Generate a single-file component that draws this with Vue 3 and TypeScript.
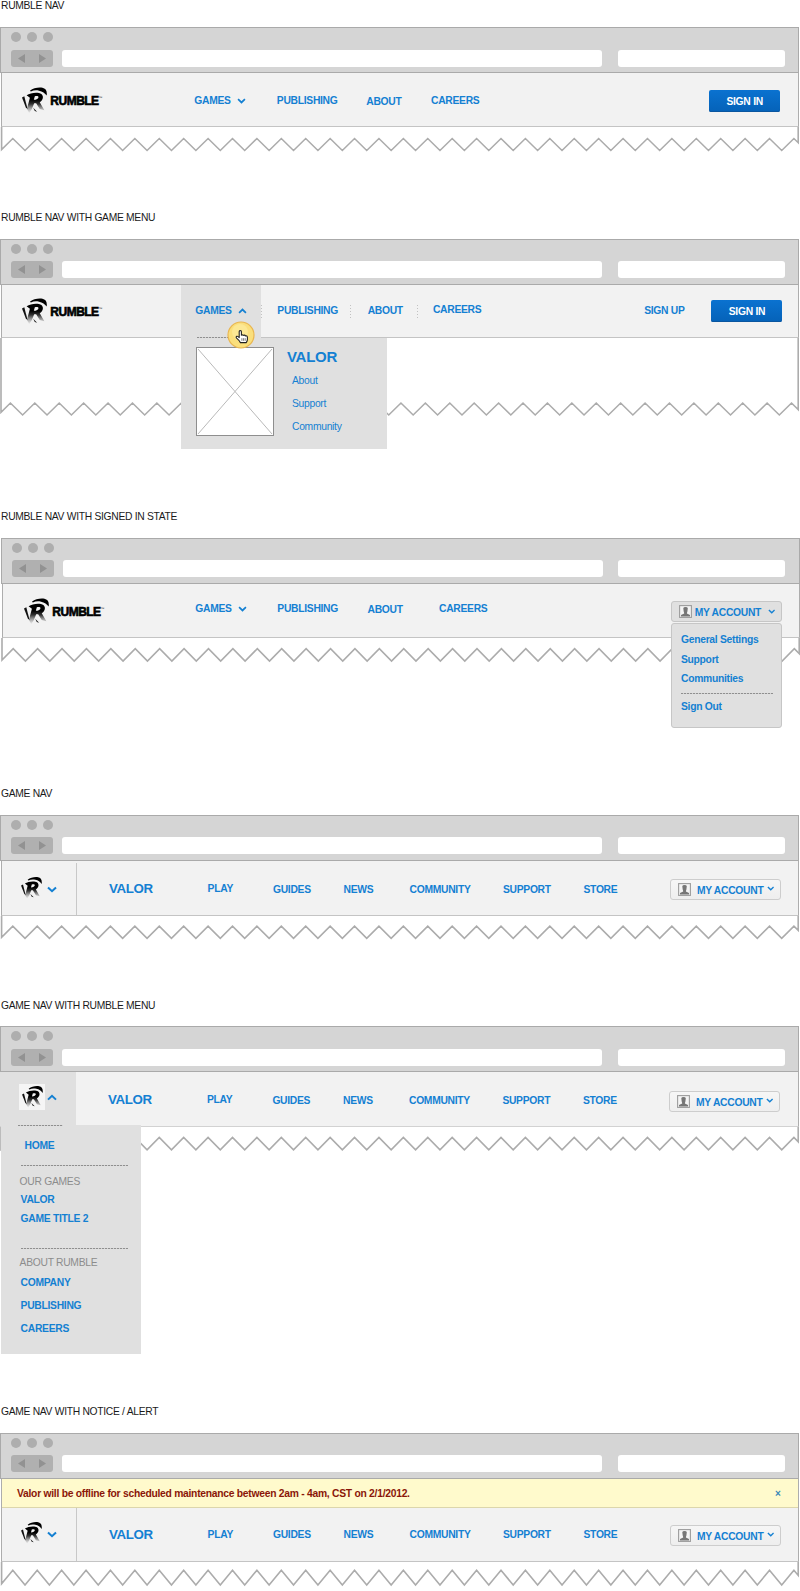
<script setup lang="ts">
interface TornEdge {
  height: number
  firstPeak: number
  peak: number
  valley: number
  left: number
}

const PERIOD = 24.41
const RIGHT = 798.2

function tornPath(edge: TornEdge): string {
  const amplitude = edge.valley - edge.peak
  const half = PERIOD / 2
  const yAt = (x: number): number => {
    const phase = Math.abs(x - edge.firstPeak) % PERIOD
    return edge.peak + amplitude * (phase <= half ? phase / half : (PERIOD - phase) / half)
  }
  const points: string[] = [`${edge.left} 0`, `${edge.left} ${yAt(edge.left).toFixed(2)}`]
  let x = edge.firstPeak
  let up = true
  while (x < RIGHT) {
    points.push(`${x.toFixed(2)} ${up ? edge.peak : edge.valley}`)
    up = !up
    x += half
  }
  points.push(`${RIGHT} ${yAt(RIGHT).toFixed(2)}`, `${RIGHT} 0`)
  return 'M' + points.join(' L')
}

interface Panel {
  id: string
  title: string
  kind: 'rumble' | 'game'
  chevron: 'down' | 'up'
  torn: TornEdge
}

const panels: Panel[] = [
  { id: 'p1', title: 'RUMBLE NAV', kind: 'rumble', chevron: 'down', torn: { height: 26, firstPeak: 12.8, peak: 11.5, valley: 23.5, left: 1.6 } },
  { id: 'p2', title: 'RUMBLE NAV WITH GAME MENU', kind: 'rumble', chevron: 'up', torn: { height: 80, firstPeak: 10.4, peak: 65, valley: 77, left: 1 } },
  { id: 'p3', title: 'RUMBLE NAV WITH SIGNED IN STATE', kind: 'rumble', chevron: 'down', torn: { height: 26, firstPeak: 12.2, peak: 10.7, valley: 23, left: 1 } },
  { id: 'p4', title: 'GAME NAV', kind: 'game', chevron: 'down', torn: { height: 26, firstPeak: 12.8, peak: 10.2, valley: 22.3, left: 1.6 } },
  { id: 'p5', title: 'GAME NAV WITH RUMBLE MENU', kind: 'game', chevron: 'up', torn: { height: 26, firstPeak: 12.8, peak: 10.5, valley: 22.8, left: 1 } },
  { id: 'p6', title: 'GAME NAV WITH NOTICE / ALERT', kind: 'game', chevron: 'down', torn: { height: 26, firstPeak: 12.8, peak: 8.2, valley: 23, left: 1.6 } },
]

const gameLinks: string[] = ['PLAY', 'GUIDES', 'NEWS', 'COMMUNITY', 'SUPPORT', 'STORE']
</script>

<template>
  <main class="sheet">
    <svg class="defs" width="0" height="0" aria-hidden="true">
      <defs>
        <linearGradient id="fade" x1="0" y1="38" x2="0" y2="80" gradientUnits="userSpaceOnUse">
          <stop offset="0" stop-color="#000" />
          <stop offset="0.3" stop-color="#333" />
          <stop offset="1" stop-color="#e4e4e4" stop-opacity="0.4" />
        </linearGradient>
        <symbol id="mark" viewBox="0 0 76 80">
          <path d="M24 10C34 2 50-1 62 1C72 3 77 10 75 25C70 17 62 12 52 10C42 8 34 9 27 13Z" fill="#000" />
          <path d="M14 24C26 16 48 13 59 20C67 27 64 39 54 45L68 70L54 66L43 48L37 48L30 66L22 78L15 66L24 32Z M39 27L36 38C44 38 50 34 50 30C50 26 45 26 39 27Z" fill="url(#fade)" fill-rule="evenodd" />
          <path d="M0 31L7 27L17 66L12 62Z" fill="#111" />
          <path d="M34 62L46 74L39 72Z" fill="#111" />
        </symbol>
        <symbol id="down" viewBox="0 0 10 7">
          <path d="M1 1.4L5 5.2L9 1.4" fill="none" stroke="#1480d2" stroke-width="2" />
        </symbol>
        <symbol id="up" viewBox="0 0 10 7">
          <path d="M1 5.6L5 1.8L9 5.6" fill="none" stroke="#1480d2" stroke-width="2" />
        </symbol>
        <symbol id="person" viewBox="0 0 13 13">
          <rect x="0.6" y="0.6" width="11.8" height="11.8" fill="#f4f4f4" stroke="#9c9c9c" stroke-width="1.1" />
          <path d="M4.3 3.2Q4.5 2 6.5 2Q8.6 2 8.8 3.2L8.4 6.6Q8 7.6 7.9 8.6L11 10V11.4H2V10L5.2 8.6Q5.1 7.6 4.7 6.6Z" fill="#767676" />
        </symbol>
      </defs>
    </svg>

    <section v-for="panel in panels" :key="panel.id" class="panel" :class="panel.id">
      <h2 class="title">{{ panel.title }}</h2>

      <div class="chrome">
        <div class="lights"><i></i><i></i><i></i></div>
        <div class="toolbar">
          <svg class="history" viewBox="0 0 42 17">
            <rect width="42" height="17" rx="3" fill="#b0b0b0" />
            <path d="M7 8.5L14 4V13ZM35 8.5L28 4V13Z" fill="#929292" />
          </svg>
          <div class="field address"></div>
          <div class="field search"></div>
        </div>
      </div>

      <div v-if="panel.id === 'p6'" class="alert">
        <span>Valor will be offline for scheduled maintenance between 2am - 4am, CST on 2/1/2012.</span>
        <span class="close">×</span>
      </div>

      <nav v-if="panel.kind === 'rumble'" class="nav rumble">
        <div class="brand">
          <svg class="mark"><use href="#mark" /></svg>
          <span class="word">RUMBLE</span><span class="tm">™</span>
        </div>
        <div class="games">
          <a>GAMES</a>
          <svg class="chevron"><use :href="'#' + panel.chevron" /></svg>
        </div>
        <i v-if="panel.id === 'p2'" class="sep"></i>
        <a>PUBLISHING</a>
        <i v-if="panel.id === 'p2'" class="sep"></i>
        <a class="about">ABOUT</a>
        <i v-if="panel.id === 'p2'" class="sep"></i>
        <a class="careers">CAREERS</a>
        <a v-if="panel.id === 'p2'">SIGN UP</a>
        <button v-if="panel.id !== 'p3'" class="signin">SIGN IN</button>
        <div v-else class="account open">
          <svg class="person"><use href="#person" /></svg>
          <span>MY ACCOUNT</span>
          <svg class="chevron"><use href="#down" /></svg>
        </div>
      </nav>

      <nav v-else class="nav game">
        <div class="home">
          <svg class="mark"><use href="#mark" /></svg>
          <svg class="chevron"><use :href="'#' + panel.chevron" /></svg>
        </div>
        <a class="game-title">VALOR</a>
        <a v-for="link in gameLinks" :key="link" :class="link.toLowerCase()">{{ link }}</a>
        <div class="account">
          <svg class="person"><use href="#person" /></svg>
          <span>MY ACCOUNT</span>
          <svg class="chevron"><use href="#down" /></svg>
        </div>
      </nav>

      <svg class="torn" width="800" :height="panel.torn.height">
        <path :d="tornPath(panel.torn)" fill="none" stroke="#acacac" stroke-width="1.6" />
      </svg>

      <template v-if="panel.id === 'p2'">
        <div class="games-menu">
          <svg class="placeholder" viewBox="0 0 78 89">
            <rect x="0.5" y="0.5" width="77" height="88" fill="#fff" stroke="#8e8e8e" />
            <path d="M2 2L76 87M76 2L2 87" stroke="#b9b9b9" stroke-width="1" />
          </svg>
          <div class="games-links">
            <a class="heading">VALOR</a>
            <a>About</a>
            <a>Support</a>
            <a>Community</a>
          </div>
        </div>
        <i class="dots tab-dots"></i>
        <svg class="pointer" viewBox="0 0 28 28">
          <circle cx="14" cy="14" r="13" fill="#fadf7c" stroke="#e9b650" stroke-width="1.2" />
          <circle cx="13" cy="11" r="8" fill="#fdeea8" opacity="0.55" />
          <path d="M12.2 16.6V10.6Q12.4 9.4 13.5 9.6Q14.4 9.7 14.4 10.8V14.2Q15.4 13.3 16.4 14.4Q17.6 13.6 18.4 14.9Q20.2 14.5 20.4 16.2V18.6Q20.2 20.2 19.2 21.6H13.4Q12 19.2 9.6 17.2Q8.6 15.9 9.8 15.3Q11 15 12.2 16.6Z" fill="#fff" stroke="#222" stroke-width="1.1" stroke-linejoin="round" />
          <path d="M14.9 17.2V19.8M16.6 17.2V19.8M18.2 17.2V19.8" stroke="#555" stroke-width="0.8" />
        </svg>
      </template>

      <div v-if="panel.id === 'p3'" class="account-menu">
        <a>General Settings</a>
        <a>Support</a>
        <a>Communities</a>
        <i class="dots"></i>
        <a>Sign Out</a>
      </div>

      <div v-if="panel.id === 'p5'" class="rumble-menu">
        <i class="dots short"></i>
        <a class="first">HOME</a>
        <i class="dots"></i>
        <h3>OUR GAMES</h3>
        <a>VALOR</a>
        <a class="second">GAME TITLE 2</a>
        <i class="dots lower"></i>
        <h3 class="about-head">ABOUT RUMBLE</h3>
        <a class="company">COMPANY</a>
        <a class="spaced">PUBLISHING</a>
        <a class="spaced">CAREERS</a>
      </div>
    </section>
  </main>
</template>

<style>
body {
  margin: 0;
  background: #fff;
}
</style>

<style scoped>
.sheet {
  width: 800px;
  height: 1591px;
  overflow: hidden;
  font: 10.3px/12px "Liberation Sans", Arial, sans-serif;
  letter-spacing: -0.28px;
  color: #1480d2;
}
.defs {
  position: absolute;
}
.sheet a {
  display: block;
  font-weight: bold;
  white-space: nowrap;
}
.panel {
  position: relative;
  width: 799px;
}
.p1 { height: 212px; }
.p2 { height: 299px; }
.p3 { height: 277px; margin-left: 1px; }
.p4 { height: 211px; }
.p5 { height: 407px; }
.p6 { height: 185px; }

.title {
  height: 27px;
  margin: 0;
  padding-left: 1px;
  font-size: 10.3px;
  font-weight: normal;
  line-height: 12px;
  letter-spacing: -0.3px;
  color: #1a1a1a;
  box-sizing: border-box;
}
.p3 .title { padding-left: 0; }
.p5 .title { padding-top: 1px; }

.chrome {
  display: flex;
  flex-direction: column;
  gap: 7.6px;
  height: 46px;
  box-sizing: border-box;
  padding: 4px 0 5px 10px;
  background: #d5d5d5;
  border: 1px solid #aaa;
}
.lights {
  display: flex;
  gap: 6px;
}
.lights i {
  width: 10px;
  height: 10px;
  border-radius: 50%;
  background: #aeaeae;
}
.toolbar {
  display: flex;
}
.p2 .toolbar,
.p3 .toolbar,
.p4 .toolbar,
.p6 .toolbar { margin-top: -0.6px; }
.p3 .chrome { padding-left: 9.5px; }
.history {
  width: 42px;
  height: 17px;
}
.field {
  height: 17px;
  border-radius: 3px;
  background: #fff;
}
.address {
  width: 540px;
  margin-left: 9.4px;
}
.search {
  width: 167px;
  margin-left: 15.5px;
}

.alert {
  display: flex;
  justify-content: space-between;
  height: 29px;
  margin-left: 1px;
  box-sizing: border-box;
  padding: 9px 17.5px 0 15px;
  background: #fffacc;
  border: solid #adadad;
  border-width: 0 1px;
  box-shadow: inset 0 -1px #dcd6ac;
  color: #8a1608;
  font-weight: bold;
  letter-spacing: -0.26px;
}
.close {
  font-size: 10px;
  color: #3a88b8;
}

.nav {
  display: grid;
  align-items: start;
  height: 54px;
  margin-left: 1px;
  box-sizing: border-box;
  background: #f2f2f2;
  border: 1px solid #adadad;
  border-top: 0;
  border-bottom-color: #c4c4c4;
}
.nav > a,
.games {
  padding-top: 22px;
}
.p1 .rumble { grid-template-columns: 192.3px 82.5px 89.5px 64.7px 278.2px auto; }
.p2 .rumble { grid-template-columns: 179px 80px 16.3px 73.2px 17.2px 49px 16.3px 211.2px 67.3px auto; height: 53px; }
.p3 .rumble { grid-template-columns: 192.3px 82px 90.2px 71.5px 231.7px auto; }
.p2 .nav > a { padding-top: 20px; }
.p2 .nav > .careers { padding-top: 19px; }
.p3 .nav > a,
.p3 .games { padding-top: 19px; }
.p1 .nav > .about { padding-top: 23px; }
.p3 .nav > .about { padding-top: 20px; }
.games {
  display: flex;
  gap: 6.5px;
}
.p2 .games {
  height: 53px;
  box-sizing: border-box;
  padding: 20px 0 0 14.3px;
  background: #e0e0e0;
}
.chevron {
  display: block;
  width: 9px;
  height: 6px;
  margin-top: 3px;
}
.sep {
  height: 13px;
  margin-top: 20px;
  background: repeating-linear-gradient(#c2c2c2 0 1.5px, transparent 1.5px 3px) left / 1px 100% no-repeat;
}

.brand {
  display: flex;
  padding: 14px 0 0 20px;
}
.p2 .brand { padding-top: 13px; }
.p3 .brand { padding: 14px 0 0 21px; }
.brand .mark {
  width: 25px;
  height: 27px;
}
.word {
  width: 48px;
  margin: 7px 0 0 3.3px;
  font-size: 12px;
  line-height: 14px;
  font-weight: bold;
  letter-spacing: -0.5px;
  color: #000;
  -webkit-text-stroke: 0.6px #000;
}
.tm {
  margin: 7px 0 0 0;
  font-size: 4px;
  line-height: 8px;
  letter-spacing: 0;
  color: #333;
}

.signin {
  width: 71px;
  height: 22px;
  margin: 17px 0 0;
  padding: 1px 0 0;
  border: 0;
  border-radius: 2px;
  background: linear-gradient(#0a72d0, #0562b8);
  box-shadow: inset 0 -1px #0a56a0;
  color: #fff;
  font: bold 10.3px/21px "Liberation Sans", Arial, sans-serif;
  letter-spacing: -0.25px;
}
.p2 .signin { margin-top: 15px; }

.account {
  display: flex;
  width: 111px;
  height: 21px;
  margin-top: 18px;
  box-sizing: border-box;
  padding: 3px 0 0 7px;
  border: 1px solid #cdcdcd;
  border-radius: 3px;
  background: linear-gradient(#f6f6f6, #eee);
  font-weight: bold;
}
.account .person {
  width: 13px;
  height: 13px;
}
.account span {
  width: 70px;
  margin: 2px 0 0 6px;
  white-space: nowrap;
}
.account .chevron {
  width: 7.5px;
  height: 5px;
  margin-top: 3px;
}
.account.open {
  margin-top: 17px;
  background: #e0e0e0;
  border-color: #c6c6c6;
}
.open span {
  width: 73px;
  margin-left: 3px;
}
.open .chevron { margin-top: 4px; }

.game {
  height: 55px;
  grid-template-columns: 75px 130.6px 65.4px 70.6px 66px 93.4px 80.5px 86.5px auto;
}
.game > a { padding-top: 22px; }
.nav.game > a { padding-top: 23px; }
.nav.game > .play { padding-top: 22px; }
.home {
  display: flex;
  height: 52px;
  margin-top: 2px;
  box-sizing: border-box;
  padding: 14px 0 0 19px;
  border-right: 1px solid #c8c8c8;
}
.home .mark {
  width: 21px;
  height: 22px;
}
.home .chevron {
  width: 10px;
  height: 7px;
  margin: 9px 0 0 5px;
}
.nav.game > .game-title {
  padding-left: 32px;
  padding-top: 20px;
  font-size: 13.3px;
  line-height: 15px;
  letter-spacing: -0.35px;
}
.p5 .nav {
  margin-left: 0;
  border-left: 0;
  border-bottom-color: #d2d2d2;
  grid-template-columns: 76px 131px 65.4px 70.6px 66px 93.4px 80.5px 86.2px auto;
}
.p5 .home {
  height: 54px;
  margin: 0;
  padding: 12px 0 0 19px;
  border: 0;
  background: #e0e0e0;
}
.p5 .home .mark {
  padding: 2px 2px 2px 3px;
  background: #f5f5f5;
}
.p5 .home .chevron { margin: 10px 0 0 2px; }
.p5 .account { margin-top: 19px; }
.p6 .nav { height: 54px; }
.p6 .nav.game > a { padding-top: 21px; }
.p6 .nav.game > .game-title { padding-top: 19px; }
.p6 .home { height: 53px; margin-top: 0; }
.p6 .account { margin-top: 17px; }

.torn {
  display: block;
  overflow: visible;
}

.dots {
  display: block;
  height: 1px;
  background: repeating-linear-gradient(90deg, #8f8f8f 0 2px, #d2d2d2 2px 3px);
}

.games-menu {
  position: absolute;
  left: 181px;
  top: 126px;
  display: flex;
  width: 205.6px;
  height: 111px;
  box-sizing: border-box;
  padding: 9px 0 0 14.5px;
  background: #e0e0e0;
}
.placeholder {
  width: 78px;
  height: 89px;
}
.games-links {
  padding: 1px 0 0 18.5px;
}
.games-links a {
  height: 12px;
  font-weight: normal;
  margin-bottom: 11px;
  letter-spacing: -0.28px;
}
.games-links .heading {
  height: 18px;
  margin: 0 0 9px -5px;
  font-size: 15px;
  line-height: 17px;
  font-weight: bold;
}
.tab-dots {
  position: absolute;
  left: 197px;
  top: 124.5px;
  width: 54px;
}
.pointer {
  position: absolute;
  left: 226.5px;
  top: 108.5px;
  width: 28px;
  height: 28px;
}

.account-menu {
  position: absolute;
  left: 670px;
  top: 112px;
  width: 111px;
  height: 105px;
  box-sizing: border-box;
  padding: 10px 8.5px 0 9px;
  background: #e0e0e0;
  border: 1px solid #c6c6c6;
  border-radius: 3px;
}
.account-menu a { margin-bottom: 7.6px; }
.account-menu .dots { margin: 0 0 7px; }

.rumble-menu {
  position: absolute;
  left: 1px;
  top: 126px;
  width: 140px;
  height: 229px;
  box-sizing: border-box;
  padding-left: 19.6px;
  background: #e0e0e0;
}
.rumble-menu .dots { width: 107px; }
.rumble-menu .short {
  width: 45px;
  margin-left: -3px;
}
.rumble-menu .first { margin: 14px 0 13px 4px; }
.rumble-menu h3 {
  margin: 10px 0 6px -1px;
  font: 10.3px/12px "Liberation Sans", Arial, sans-serif;
  color: #8c8c8c;
}
.rumble-menu .second { margin-top: 7px; }
.rumble-menu .lower { margin-top: 23px; }
.rumble-menu .about-head { margin: 8px 0 8px -1px; }
.rumble-menu .spaced { margin-top: 11px; }
</style>
